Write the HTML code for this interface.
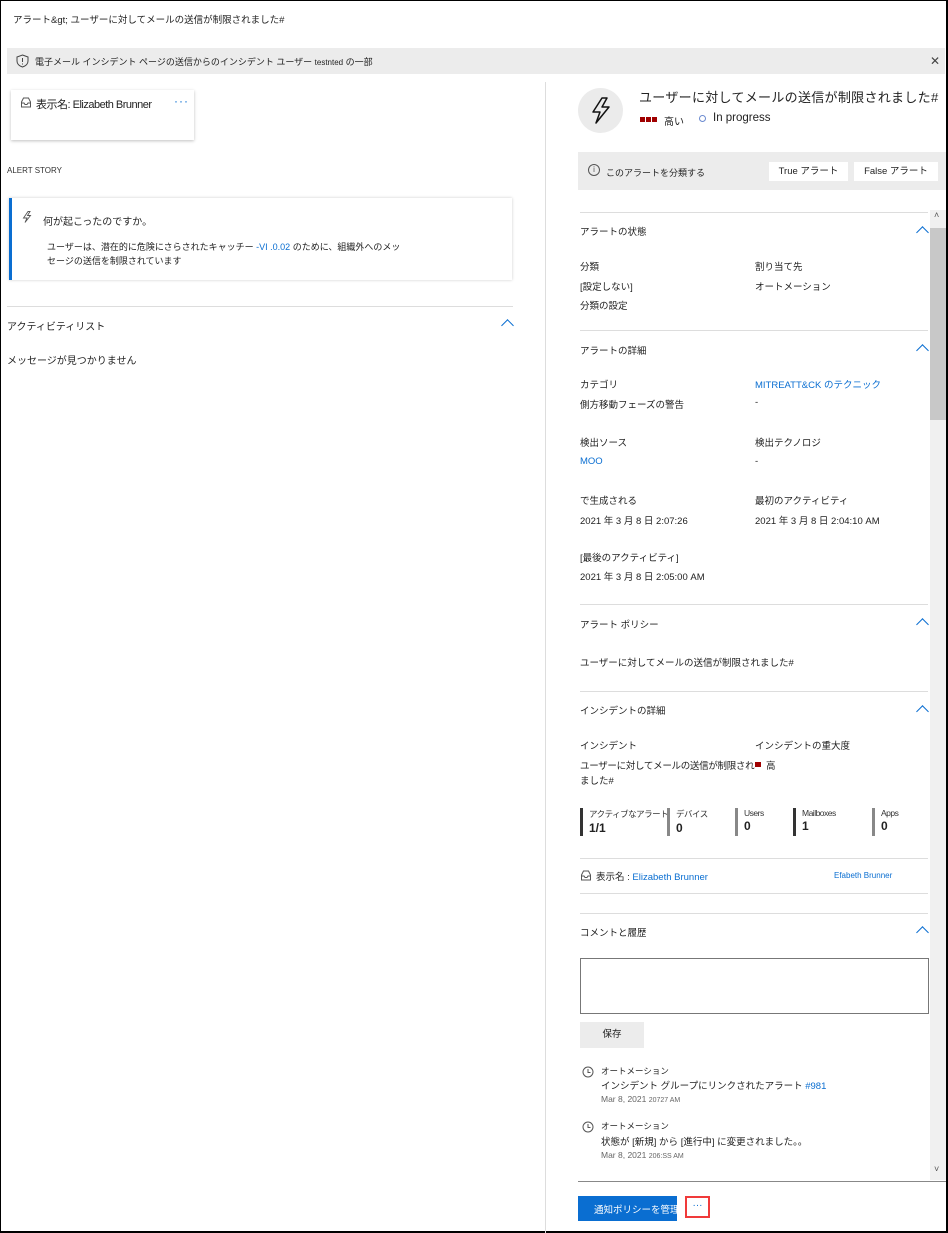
<!DOCTYPE html>
<html><head><meta charset="utf-8"><style>
*{margin:0;padding:0;box-sizing:border-box}
body{width:948px;height:1233px;position:relative;background:#fff;font-family:"Liberation Sans","Noto Sans CJK JP",sans-serif;font-size:10px;color:#222;overflow:hidden}
.a{position:absolute;white-space:nowrap}
.hr{position:absolute;height:1px;background:#ddd}
.chev{position:absolute;width:9px;height:9px;border-left:1.5px solid #0a6ed1;border-top:1.5px solid #0a6ed1;transform:rotate(45deg)}
.blue{color:#0a6ed1}
.stat{position:absolute;border-left:3px solid #888;padding-left:6px;height:28px;top:808px}
.stat .l{font-size:8.5px;color:#333;letter-spacing:-0.5px}
.stat .v{font-size:12px;font-weight:bold;margin-top:1px}
</style></head><body>
<div style="position:absolute;inset:0;border:1px solid #000;border-right:2px solid #000;border-bottom:2px solid #000"></div>
<div class="a" style="left:13px;top:12px;font-size:9.5px">アラート&amp;gt;  ユーザーに対してメールの送信が制限されました#</div>
<div style="position:absolute;left:7px;top:48px;width:938px;height:26px;background:#ececec"></div>
<svg class="a" style="left:16px;top:54px" width="13" height="14" viewBox="0 0 13 14"><path d="M6.5 1 L12 3 V7 C12 10 9.5 12 6.5 13 C3.5 12 1 10 1 7 V3 Z" fill="none" stroke="#444" stroke-width="1"/><path d="M6.5 4v4M6.5 9.5v1" stroke="#444"/></svg>
<div class="a" style="left:35px;top:55px;font-size:9px">電子メール インシデント ページの送信からのインシデント ユーザー <span style="font-size:8px">testnted</span> の一部</div>
<div class="a" style="left:930px;top:54px;font-size:12px;color:#444">✕</div>
<div style="position:absolute;left:545px;top:82px;width:1px;height:1151px;background:#ddd"></div>
<div style="position:absolute;left:11px;top:90px;width:183px;height:50px;background:#fff;box-shadow:0 1px 3px rgba(0,0,0,.25)"></div>
<svg class="a" style="left:20px;top:97px" width="12" height="11"><path d="M1.5 10V5L3.5 1H8.5L10.5 5V10Z M1.5 6H4L5 7.5H7L8 6H10.5" fill="none" stroke="#555"/></svg>
<div class="a" style="left:36px;top:96px;font-size:11px;letter-spacing:-0.5px">表示名: Elizabeth Brunner</div>
<div class="a blue" style="left:174px;top:94px;font-size:12px;letter-spacing:1px">···</div>
<div class="a" style="left:7px;top:166px;font-size:8px;color:#333">ALERT STORY</div>
<div style="position:absolute;left:9px;top:198px;width:503px;height:82px;background:#fff;box-shadow:0 0 3px rgba(0,0,0,.2);border-left:3px solid #0a6ed1"></div>
<svg class="a" style="left:22px;top:211px" width="10" height="12" viewBox="0 0 10 12"><path d="M6 0.5 L1.5 7 H5 L3 11.5 L8.5 4.5 H5.5 L8 0.5 Z" fill="none" stroke="#555" stroke-width="0.9"/></svg>
<div class="a" style="left:43px;top:213px;font-size:10px">何が起こったのですか。</div>
<div class="a" style="left:47px;top:240px;font-size:9px">ユーザーは、潜在的に危険にさらされたキャッチー <span class="blue">-VI .0.02</span> のために、組織外へのメッ</div>
<div class="a" style="left:47px;top:254px;font-size:9px">セージの送信を制限されています</div>
<div class="hr" style="left:7px;top:306px;width:506px"></div>
<div class="a" style="left:7px;top:318px;font-size:10px">アクティビティリスト</div>
<div class="chev" style="left:503px;top:321px"></div>
<div class="a" style="left:7px;top:352px;font-size:10px">メッセージが見つかりません</div>

<div style="position:absolute;left:578px;top:88px;width:45px;height:45px;border-radius:50%;background:#ebebeb"></div>
<svg class="a" style="left:590px;top:97px" width="22" height="27" viewBox="0 0 22 27"><path d="M12 1 L3 15 H10 L6 26 L19 10 H12 L17 1 Z" fill="none" stroke="#111" stroke-width="1.5" stroke-linejoin="round"/></svg>
<div class="a" style="left:639px;top:87px;font-size:13px;letter-spacing:0.3px">ユーザーに対してメールの送信が制限されました#</div>
<div class="a" style="left:640px;top:117px;width:5px;height:5px;background:#a00000"></div>
<div class="a" style="left:646px;top:117px;width:5px;height:5px;background:#a00000"></div>
<div class="a" style="left:652px;top:117px;width:5px;height:5px;background:#a00000"></div>
<div class="a" style="left:664px;top:113px;font-size:10px">高い</div>
<div class="a" style="left:699px;top:115px;width:7px;height:7px;border:1px solid #6b8ad0;border-radius:50%"></div>
<div class="a" style="left:713px;top:112px;font-size:11.5px">In progress</div>
<div style="position:absolute;left:578px;top:152px;width:368px;height:38px;background:#ececec"></div>
<div class="a" style="left:588px;top:164px;width:12px;height:12px;border:1px solid #555;border-radius:50%;font-size:8px;text-align:center;line-height:10px;color:#555">i</div>
<div class="a" style="left:606px;top:166px;font-size:9px">このアラートを分類する</div>
<div style="position:absolute;left:769px;top:162px;width:79px;height:19px;background:#fff;text-align:center;font-size:9.5px;line-height:19px">True アラート</div>
<div style="position:absolute;left:854px;top:162px;width:84px;height:19px;background:#fff;text-align:center;font-size:9.5px;line-height:19px">False アラート</div>

<div style="position:absolute;left:930px;top:210px;width:16px;height:970px;background:#f0f0f0"></div>
<div style="position:absolute;left:930px;top:228px;width:16px;height:192px;background:#c8c8c8"></div>
<div class="a" style="left:934px;top:210px;font-size:9px;color:#555">˄</div>
<div class="a" style="left:934px;top:1164px;font-size:9px;color:#555">˅</div>

<div class="hr" style="left:580px;top:212px;width:348px"></div>
<div class="a" style="left:580px;top:224px;font-size:9.5px">アラートの状態</div><div class="chev" style="left:918px;top:228px"></div>
<div class="a" style="left:580px;top:259px;font-size:9.5px">分類</div>
<div class="a" style="left:755px;top:259px;font-size:9.5px">割り当て先</div>
<div class="a" style="left:580px;top:279px;font-size:9.5px">[設定しない]</div>
<div class="a" style="left:755px;top:279px;font-size:9.5px">オートメーション</div>
<div class="a" style="left:580px;top:298px;font-size:9.5px">分類の設定</div>
<div class="hr" style="left:580px;top:330px;width:348px"></div>
<div class="a" style="left:580px;top:343px;font-size:9.5px">アラートの詳細</div><div class="chev" style="left:918px;top:346px"></div>
<div class="a" style="left:580px;top:377px;font-size:9.5px">カテゴリ</div>
<div class="a blue" style="left:755px;top:377px;font-size:9.5px">MITREATT&amp;CK のテクニック</div>
<div class="a" style="left:580px;top:397px;font-size:9.5px">側方移動フェーズの警告</div>
<div class="a" style="left:755px;top:397px;font-size:9.5px">-</div>
<div class="a" style="left:580px;top:435px;font-size:9.5px">検出ソース</div>
<div class="a" style="left:755px;top:435px;font-size:9.5px">検出テクノロジ</div>
<div class="a blue" style="left:580px;top:456px;font-size:9.5px">MOO</div>
<div class="a" style="left:755px;top:456px;font-size:9.5px">-</div>
<div class="a" style="left:580px;top:493px;font-size:9.5px">で生成される</div>
<div class="a" style="left:755px;top:493px;font-size:9.5px">最初のアクティビティ</div>
<div class="a" style="left:580px;top:513px;font-size:9.5px">2021 年 3 月 8 日 2:07:26</div>
<div class="a" style="left:755px;top:513px;font-size:9.5px">2021 年 3 月 8 日 2:04:10 AM</div>
<div class="a" style="left:580px;top:550px;font-size:9.5px">[最後のアクティビティ]</div>
<div class="a" style="left:580px;top:569px;font-size:9.5px">2021 年 3 月 8 日 2:05:00 AM</div>
<div class="hr" style="left:580px;top:604px;width:348px"></div>
<div class="a" style="left:580px;top:617px;font-size:9.5px">アラート ポリシー</div><div class="chev" style="left:918px;top:620px"></div>
<div class="a" style="left:580px;top:655px;font-size:9.5px">ユーザーに対してメールの送信が制限されました#</div>
<div class="hr" style="left:580px;top:691px;width:348px"></div>
<div class="a" style="left:580px;top:703px;font-size:9.5px">インシデントの詳細</div><div class="chev" style="left:918px;top:707px"></div>
<div class="a" style="left:580px;top:738px;font-size:9.5px">インシデント</div>
<div class="a" style="left:755px;top:738px;font-size:9.5px">インシデントの重大度</div>
<div class="a" style="left:580px;top:758px;font-size:9.5px;letter-spacing:-0.3px">ユーザーに対してメールの送信が制限され</div>
<div class="a" style="left:580px;top:773px;font-size:9.5px">ました#</div>
<div class="a" style="left:755px;top:762px;width:6px;height:5px;background:#a00000"></div>
<div class="a" style="left:766px;top:758px;font-size:9.5px">高</div>
<div class="stat" style="left:580px;border-color:#333"><div class="l">アクティブなアラート</div><div class="v">1/1</div></div>
<div class="stat" style="left:667px"><div class="l">デバイス</div><div class="v">0</div></div>
<div class="stat" style="left:735px"><div class="l">Users</div><div class="v">0</div></div>
<div class="stat" style="left:793px;border-color:#333"><div class="l">Mailboxes</div><div class="v">1</div></div>
<div class="stat" style="left:872px"><div class="l">Apps</div><div class="v">0</div></div>
<div class="hr" style="left:580px;top:858px;width:348px"></div>
<svg class="a" style="left:580px;top:870px" width="12" height="11"><path d="M1.5 10V5L3.5 1H8.5L10.5 5V10Z M1.5 6H4L5 7.5H7L8 6H10.5" fill="none" stroke="#555"/></svg>
<div class="a" style="left:596px;top:869px;font-size:9.5px">表示名 : <span class="blue">Elizabeth Brunner</span></div>
<div class="a blue" style="left:834px;top:871px;font-size:8px">Efabeth Brunner</div>
<div class="hr" style="left:580px;top:893px;width:348px"></div>
<div class="hr" style="left:580px;top:913px;width:348px"></div>
<div class="a" style="left:580px;top:925px;font-size:9.5px">コメントと履歴</div><div class="chev" style="left:918px;top:928px"></div>
<div style="position:absolute;left:580px;top:958px;width:349px;height:56px;border:1px solid #777"></div>
<div style="position:absolute;left:580px;top:1022px;width:64px;height:26px;background:#ececec;text-align:center;line-height:26px;font-size:9.5px">保存</div>
<svg class="a" style="left:582px;top:1066px" width="12" height="12"><circle cx="6" cy="6" r="5" fill="none" stroke="#555"/><path d="M6 3V6.5H8.5" fill="none" stroke="#555"/></svg>
<div class="a" style="left:601px;top:1065px;font-size:8.5px">オートメーション</div>
<div class="a" style="left:601px;top:1078px;font-size:9.5px">インシデント グループにリンクされたアラート <span class="blue">#981</span></div>
<div class="a" style="left:601px;top:1094px;font-size:8.5px;color:#666">Mar 8, 2021 <span style="font-size:7px">20727 AM</span></div>
<svg class="a" style="left:582px;top:1121px" width="12" height="12"><circle cx="6" cy="6" r="5" fill="none" stroke="#555"/><path d="M6 3V6.5H8.5" fill="none" stroke="#555"/></svg>
<div class="a" style="left:601px;top:1120px;font-size:8.5px">オートメーション</div>
<div class="a" style="left:601px;top:1134px;font-size:9.5px">状態が [新規] から [進行中] に変更されました。。</div>
<div class="a" style="left:601px;top:1150px;font-size:8.5px;color:#666">Mar 8, 2021 <span style="font-size:7px">206:SS AM</span></div>
<div style="position:absolute;left:578px;top:1181px;width:368px;height:1px;background:#888"></div>
<div style="position:absolute;left:578px;top:1196px;width:99px;height:25px;background:#0a6ed1"></div>
<div class="a" style="left:594px;top:1202px;font-size:9.5px;color:#fff">通知ポリシーを管理する</div>
<div style="position:absolute;left:685px;top:1196px;width:25px;height:22px;border:2px solid #f03a3a;background:#fff;color:#0a6ed1;font-size:10px;text-align:center;line-height:16px">···</div>
</body></html>
